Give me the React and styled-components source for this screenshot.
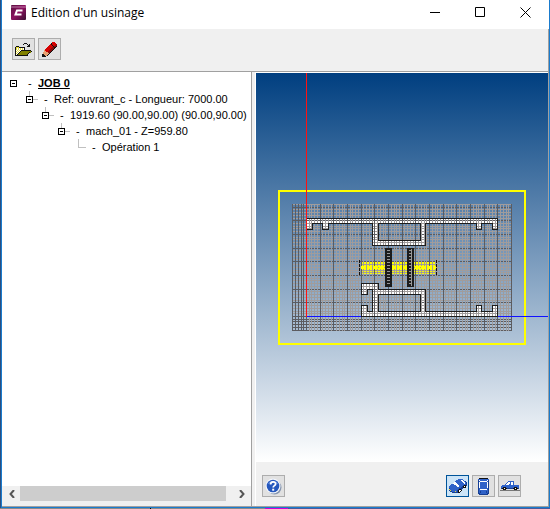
import React, { useState } from 'react';
import styled, { createGlobalStyle, css } from 'styled-components';

const GlobalStyle = createGlobalStyle`
    * {
        box-sizing: border-box;
    }

    body {
        margin: 0;
        font-family: "Liberation Sans", Arial, sans-serif;
        font-size: 11px;
        color: #000;
    }

    svg {
        display: block;
    }
`;

const Desktop = styled.div`
    min-height: 100vh;
    display: flex;
    padding: 0 0 1px 1px;
    background:
        linear-gradient(90deg, #8a8a8a 150px, #000 150px, #000 151px, #8a8a8a 151px, #8a8a8a 265px, #d400d4 265px, #d400d4 288px, #4a5a9a 288px)
        bottom / 100% 1px no-repeat,
        #2c4f80;
`;

const Window = styled.main`
    flex: 1;
    min-width: 0;
    display: flex;
    flex-direction: column;
    background-color: #f0f0f0;
    border: solid #1a7bcd;
    border-width: 0 1px 1px;
`;

const TitleBar = styled.header`
    display: flex;
    align-items: center;
    height: 29px;
    padding: 0 1px 4px 9px;
    background-color: #fff;
`;

const Title = styled.h1`
    flex: 1;
    margin: 0 0 0 5px;
    font: 12px/16px "Open Sans", "Segoe UI", sans-serif;
`;

const WindowButton = styled.button`
    width: 45px;
    height: 25px;
    display: flex;
    align-items: center;
    justify-content: center;
    padding: 0;
    border: none;
    background: none;
`;

const Content = styled.div`
    flex: 1;
    display: flex;
    flex-direction: column;
    border: solid #a0a0a0;
    border-width: 0 1px 1px 0;
`;

const Toolbar = styled.div`
    display: flex;
    gap: 3px;
    padding: 9px 10px 11px;
    border-bottom: 1px solid #a0a0a0;
`;

const IconButton = styled.button`
    width: 23px;
    height: 22px;
    display: flex;
    align-items: center;
    justify-content: center;
    padding: 0;
    border: 1px solid #adadad;
    background-color: #e1e1e1;

    ${({ $active }) => $active && css`
        border-color: #005499;
        background-color: #cce4f7;
    `}
`;

const Body = styled.div`
    flex: 1;
    display: grid;
    grid-template-columns: minmax(0, 250fr) minmax(0, 296fr);
`;

const TreePanel = styled.section`
    display: flex;
    flex-direction: column;
    background-color: #fff;
    border-right: 1px solid #a0a0a0;
`;

const Tree = styled.ul`
    flex: 1;
    margin: 0;
    padding: 3px 0 0 8px;
    list-style: none;
    overflow: hidden;
`;

const Branch = styled.ul`
    margin: 0;
    padding: 0 0 0 16px;
    list-style: none;
`;

const Row = styled.div`
    display: flex;
    align-items: center;
    height: 16px;
    line-height: 16px;
    white-space: nowrap;
`;

const Toggle = styled.button`
    width: 7px;
    height: 7px;
    display: flex;
    align-items: center;
    justify-content: center;
    padding: 0;
    border: 1px solid #000;
    background: linear-gradient(#000, #000) center / 3px 1px no-repeat #fff;
`;

const Joint = styled.span`
    width: 12px;
    height: 16px;
    display: flex;
    align-items: center;

    ${({ $nested }) => $nested && css`
        background:
            linear-gradient(#c0c0c0, #c0c0c0) 3px 0 / 1px 5px no-repeat,
            linear-gradient(#c0c0c0, #c0c0c0) 7px 8px / 5px 1px no-repeat;
    `}

    ${({ $leaf }) => $leaf && css`
        background:
            linear-gradient(#c0c0c0, #c0c0c0) 4px 0 / 1px 9px no-repeat,
            linear-gradient(#c0c0c0, #c0c0c0) 4px 8px / 8px 1px no-repeat;
    `}
`;

const Dash = styled.span`
    width: 16px;
    padding-left: 6px;
`;

const Label = styled.span`
    ${({ $root }) => $root && css`
        font-weight: bold;
        text-decoration: underline;
    `}
`;

const ScrollBar = styled.div`
    display: flex;
    height: 20px;
    padding: 0 1px 5px;
    background-color: #f0f0f0;
`;

const ScrollArrow = styled.button`
    width: 17px;
    display: flex;
    align-items: center;
    justify-content: center;
    padding: 0;
    border: none;
    background: none;
`;

const ScrollTrack = styled.div`
    flex: 1;
    padding-right: 7px;
`;

const ScrollThumb = styled.div`
    height: 100%;
    background-color: #cdcdcd;
`;

const ViewPanel = styled.section`
    display: flex;
    flex-direction: column;
    margin-left: 3px;
    border: solid #fff;
    border-width: 1px 0 0 1px;
`;

const Canvas = styled.div`
    flex: 1;
    display: flex;
    align-items: flex-start;
    justify-content: center;
    overflow: hidden;
    background: linear-gradient(#003f80, #fff);
`;

const Scene = styled.svg`
    width: 100%;
    height: auto;
    overflow: visible;
`;

const Footer = styled.footer`
    display: flex;
    justify-content: space-between;
    padding: 13px 27px 9px 6px;
`;

const ViewButtons = styled.div`
    display: flex;
    gap: 3px;
`;

const OPEN_ICON = [
    '.........kkk.....',
    '........k...k.k..',
    '.............kk..',
    '.kkk........kkk..',
    'kyyykkkkkk.......',
    'kywywywywk.......',
    'kywywywywk.......',
    'kwywywkkkkkkkkkk.',
    'kywywkooooooooook',
    'kwywkoooooooooko.',
    'kywkoooooooook...',
    'kwkoooooooook....',
    'kkkkkkkkkkkkk....',
];

const PENCIL_ICON = [
    '..........rrr..',
    '.........krrrr.',
    '........rkrrrrd',
    '.......rrrkrrdd',
    '......rrrrrkddk',
    '.....rrrrrddkk.',
    '....rrrrrdddk..',
    '...rrrrrdddk...',
    '..trrrrdddk....',
    '..ttrrdddk.....',
    '.tttttddk......',
    '.ttttttk.......',
    'kkttttk........',
    'kkkttk.........',
    'kkkk...........',
];

const ISO_CAR_ICON = [
    '.........bbbbb....',
    '.......bbbbbwwb...',
    '......bbbbbbbwwbn.',
    '.....wwbbbbbbbwwbn',
    '....wwwwbbbbbbbwbn',
    '..bbbwwwwbbbbbbbbn',
    '.bbbbbbwwwbbbbnkkn',
    'bbbbbbbbwwbbbnkwk.',
    'bbbbbbbbbbbbnnkkk.',
    'nbbbbbbbbbnnnn....',
    'ybbbbbbbbnkkn.....',
    'nybbbbbbnkwwk.....',
    '.nnbbbybnkwk......',
    '...nnnnnnkk.......',
];

const TOP_CAR_ICON = [
    '.kkkkkkkkk.',
    'bbbbbbbbbbb',
    'nwbbbbbbbwn',
    'nbwwwwwwwbn',
    'nwbbbbbbbwn',
    'nwbbbbbbbwn',
    'nwbbbbbbbwn',
    'nwbbbbbbbwn',
    'nwbbbbbbbwn',
    'nwbbbbbbbwn',
    'nbbbbbbbbbn',
    'nbwwwwwwwbn',
    'nbbbbbbbbbn',
    'nbnbbbbbnbn',
    'nbnbbbbbnbn',
    'nnbbbbbbbnn',
    '.nnnnnnnnn.',
];

const SIDE_CAR_ICON = [
    '........bbbbbb......',
    '.......bwwbwwb......',
    '......bwwwbwwb......',
    '.....bwwwbbwwb......',
    '..bbbbbbbbbbbbbbbbb.',
    '.bbbbbbbbbbbbbbbbbb.',
    '.bbkkkbbbbbbbbkkkbb.',
    '.nkkwkknnnnnnkkwkkn.',
    '...kkk........kkk...',
    'gggggggggggggggggggg',
];

const INK = {
    k: '#111',
    y: '#e6dc3c',
    w: '#fff',
    o: '#808000',
    r: '#d40000',
    d: '#8a0a0a',
    t: '#e6a070',
    b: '#2f62c8',
    n: '#173f94',
    g: '#777',
};

const PixelIcon = ({ rows }) => (
    <svg width={rows[0].length} height={rows.length} shapeRendering='crispEdges' aria-hidden='true'>
        {rows.map((row, y) =>
            [...row].map((ink, x) => ink !== '.' && (
                <rect key={`${x}-${y}`} x={x} y={y} width='1' height='1' fill={INK[ink]} />
            ))
        )}
    </svg>
);

const Logo = () => (
    <svg width='15' height='15' viewBox='0 0 15 15' aria-hidden='true'>
        <defs>
            <linearGradient id='logo' x1='0' y1='0' x2='1' y2='1'>
                <stop offset='0' stopColor='#5a1040' />
                <stop offset='0.5' stopColor='#8c1260' />
                <stop offset='1' stopColor='#3a1030' />
            </linearGradient>
        </defs>
        <rect width='15' height='15' rx='1' fill='url(#logo)' />
        <path d='M0 1h15v2H0z' fill='#c07aa8' opacity='0.5' />
        <path d='M11.5 5.5H6L4.500 9.500h6' fill='none' stroke='#fff' strokeWidth='2' />
    </svg>
);

const HelpIcon = () => (
    <svg width='17' height='17' viewBox='0 0 17 17' aria-hidden='true'>
        <circle cx='9.5' cy='9.5' r='7' fill='#8797b0' />
        <circle cx='8' cy='8' r='7.5' fill='#f2f5fb' />
        <circle cx='8' cy='8' r='6.3' fill='#2457bd' />
        <path d='M3 6a5.3 4.4 0 0 1 10 0q-5-2-10 0z' fill='#6d96e4' />
        <path d='M5.6 6.4c0-3.3 5-3.2 5-.5 0 1.8-2.4 1.7-2.4 3.6' fill='none' stroke='#fff' strokeWidth='1.8' />
        <rect x='7.2' y='10.7' width='2' height='2' fill='#fff' />
    </svg>
);

// drawing origin and grid step, in drawing units
const ORIGIN = { x: 50, y: 243 };
const STEP = 2.735;
const GRID = { left: 36, right: 256, top: 131, bottom: 258 };

const columns = Array.from({ length: 81 }, (_, i) => i - 5).map((i) => ({
    at: Math.round(ORIGIN.x + i * STEP),
    dark: i % 5 === 0 || i < 0,
}));

const lines = Array.from({ length: 47 }, (_, i) => i - 5).map((i) => ({
    at: Math.round(ORIGIN.y - i * STEP),
    dark: i % 5 === 0 || i < 0,
}));

const UPPER_PROFILE = `M50 145h191v11h-5v-6h-11v6h-5v-6h-51v22h-53v-22h-44v6h-6v-6h-10v6h-6z
    M122 150v17h42v-17z`;
const LOWER_PROFILE = `M105 210h17v6h47v22h51v-6h5v6h11v-6h5v11H105v-11h6v6h5v-22h-5v5h-6z
    M122 221v17h42v-17z`;

const gridColor = ({ dark }) => (dark ? '#5c5c60' : '#a09c9c');

const Drawing = () => (
    <Scene viewBox='0 0 292 389' shapeRendering='crispEdges' role='img' aria-label='Profil'>
        <g fill='#fff' fillRule='evenodd'>
            <path d={UPPER_PROFILE} />
            <path d={LOWER_PROFILE} />
        </g>
        <path d='M105 188h75v13h-75z' fill='#ff0' />
        {lines.map((line) => (
            <rect key={line.at} x={GRID.left} y={line.at} width={GRID.right - GRID.left} height='1' fill={gridColor(line)} />
        ))}
        {columns.map((line) => (
            <rect key={line.at} x={line.at} y={GRID.top} width='1' height={GRID.bottom - GRID.top} fill={gridColor(line)} />
        ))}
        <path d='M105 194.5h75' fill='none' stroke='#ff0' strokeWidth='3' strokeDasharray='5 1' />
        <path d='M103.5 187v15M180.500 187v15' fill='none' stroke='#111' strokeDasharray='3 1' />
        <g fill='none' stroke='#1c1c1c' transform='translate(.5 .5)'>
            <path d={UPPER_PROFILE} />
            <path d={LOWER_PROFILE} />
        </g>
        <path d='M129 175h7v39h-7zM151 175h7v39h-7z' fill='#1c1c1c' />
        <path d='M132.500 177v36M154 177v36' fill='none' stroke='#999' strokeWidth='3' strokeDasharray='1 2' />
        <path d='M155.500 176v37' fill='none' stroke='#999' />
        <rect x='23' y='118' width='246' height='153' fill='none' stroke='#ff0' strokeWidth='2' />
        <rect x='50' y='243' width='55' height='1' fill='#11f' />
        <rect x='242' y='243' width='400' height='1' fill='#11f' />
        <rect x='50' y='0' width='1' height='244' fill='#f11' />
    </Scene>
);

const nodes = {
    label: 'JOB 0',
    child: {
        label: 'Ref: ouvrant_c - Longueur: 7000.00',
        child: {
            label: '1919.60 (90.00,90.00) (90.00,90.00)',
            child: {
                label: 'mach_01 - Z=959.80',
                child: { label: 'Opération 1' },
            },
        },
    },
};

const TreeNode = ({ node, root }) => {
    const [open, setOpen] = useState(true);

    return (
        <li>
            <Row>
                <Joint $nested={!root && node.child} $leaf={!node.child}>
                    {node.child && (
                        <Toggle aria-label={node.label} aria-expanded={open} onClick={() => setOpen(!open)} />
                    )}
                </Joint>
                <Dash>-</Dash>
                <Label $root={root}>{node.label}</Label>
            </Row>
            {node.child && open && (
                <Branch>
                    <TreeNode node={node.child} />
                </Branch>
            )}
        </li>
    );
};

const views = [
    { id: 'iso', label: 'Vue isométrique', rows: ISO_CAR_ICON },
    { id: 'top', label: 'Vue de dessus', rows: TOP_CAR_ICON },
    { id: 'side', label: 'Vue de côté', rows: SIDE_CAR_ICON },
];

const App = () => {
    const [view, setView] = useState('iso');

    return (
        <Desktop>
            <GlobalStyle />
            <Window>
                <TitleBar>
                    <Logo />
                    <Title>Edition d'un usinage</Title>
                    <WindowButton aria-label='Réduire'>
                        <svg width='11' height='11'><path d='M0 5.500h10' stroke='#000' /></svg>
                    </WindowButton>
                    <WindowButton aria-label='Agrandir'>
                        <svg width='11' height='11'><path d='M.5.500h9v9h-9z' fill='none' stroke='#000' /></svg>
                    </WindowButton>
                    <WindowButton aria-label='Fermer'>
                        <svg width='11' height='11'><path d='M.5.500l10 10M10.500.5l-10 10' stroke='#000' /></svg>
                    </WindowButton>
                </TitleBar>

                <Content>
                    <Toolbar>
                        <IconButton aria-label='Ouvrir'><PixelIcon rows={OPEN_ICON} /></IconButton>
                        <IconButton aria-label='Modifier'><PixelIcon rows={PENCIL_ICON} /></IconButton>
                    </Toolbar>

                    <Body>
                        <TreePanel>
                            <Tree>
                                <TreeNode node={nodes} root />
                            </Tree>
                            <ScrollBar>
                                <ScrollArrow aria-label='Gauche'>
                                    <svg width='6' height='8'><path d='M5 0L1.500 4L5 8' fill='none' stroke='#555' strokeWidth='2' /></svg>
                                </ScrollArrow>
                                <ScrollTrack><ScrollThumb /></ScrollTrack>
                                <ScrollArrow aria-label='Droite'>
                                    <svg width='6' height='8'><path d='M1 0L4.500 4L1 8' fill='none' stroke='#555' strokeWidth='2' /></svg>
                                </ScrollArrow>
                            </ScrollBar>
                        </TreePanel>

                        <ViewPanel>
                            <Canvas>
                                <Drawing />
                            </Canvas>
                            <Footer>
                                <IconButton aria-label='Aide'><HelpIcon /></IconButton>
                                <ViewButtons>
                                    {views.map(({ id, label, rows }) => (
                                        <IconButton
                                            key={id}
                                            aria-label={label}
                                            $active={view === id}
                                            onClick={() => setView(id)}
                                        >
                                            <PixelIcon rows={rows} />
                                        </IconButton>
                                    ))}
                                </ViewButtons>
                            </Footer>
                        </ViewPanel>
                    </Body>
                </Content>
            </Window>
        </Desktop>
    );
};

export default App;
